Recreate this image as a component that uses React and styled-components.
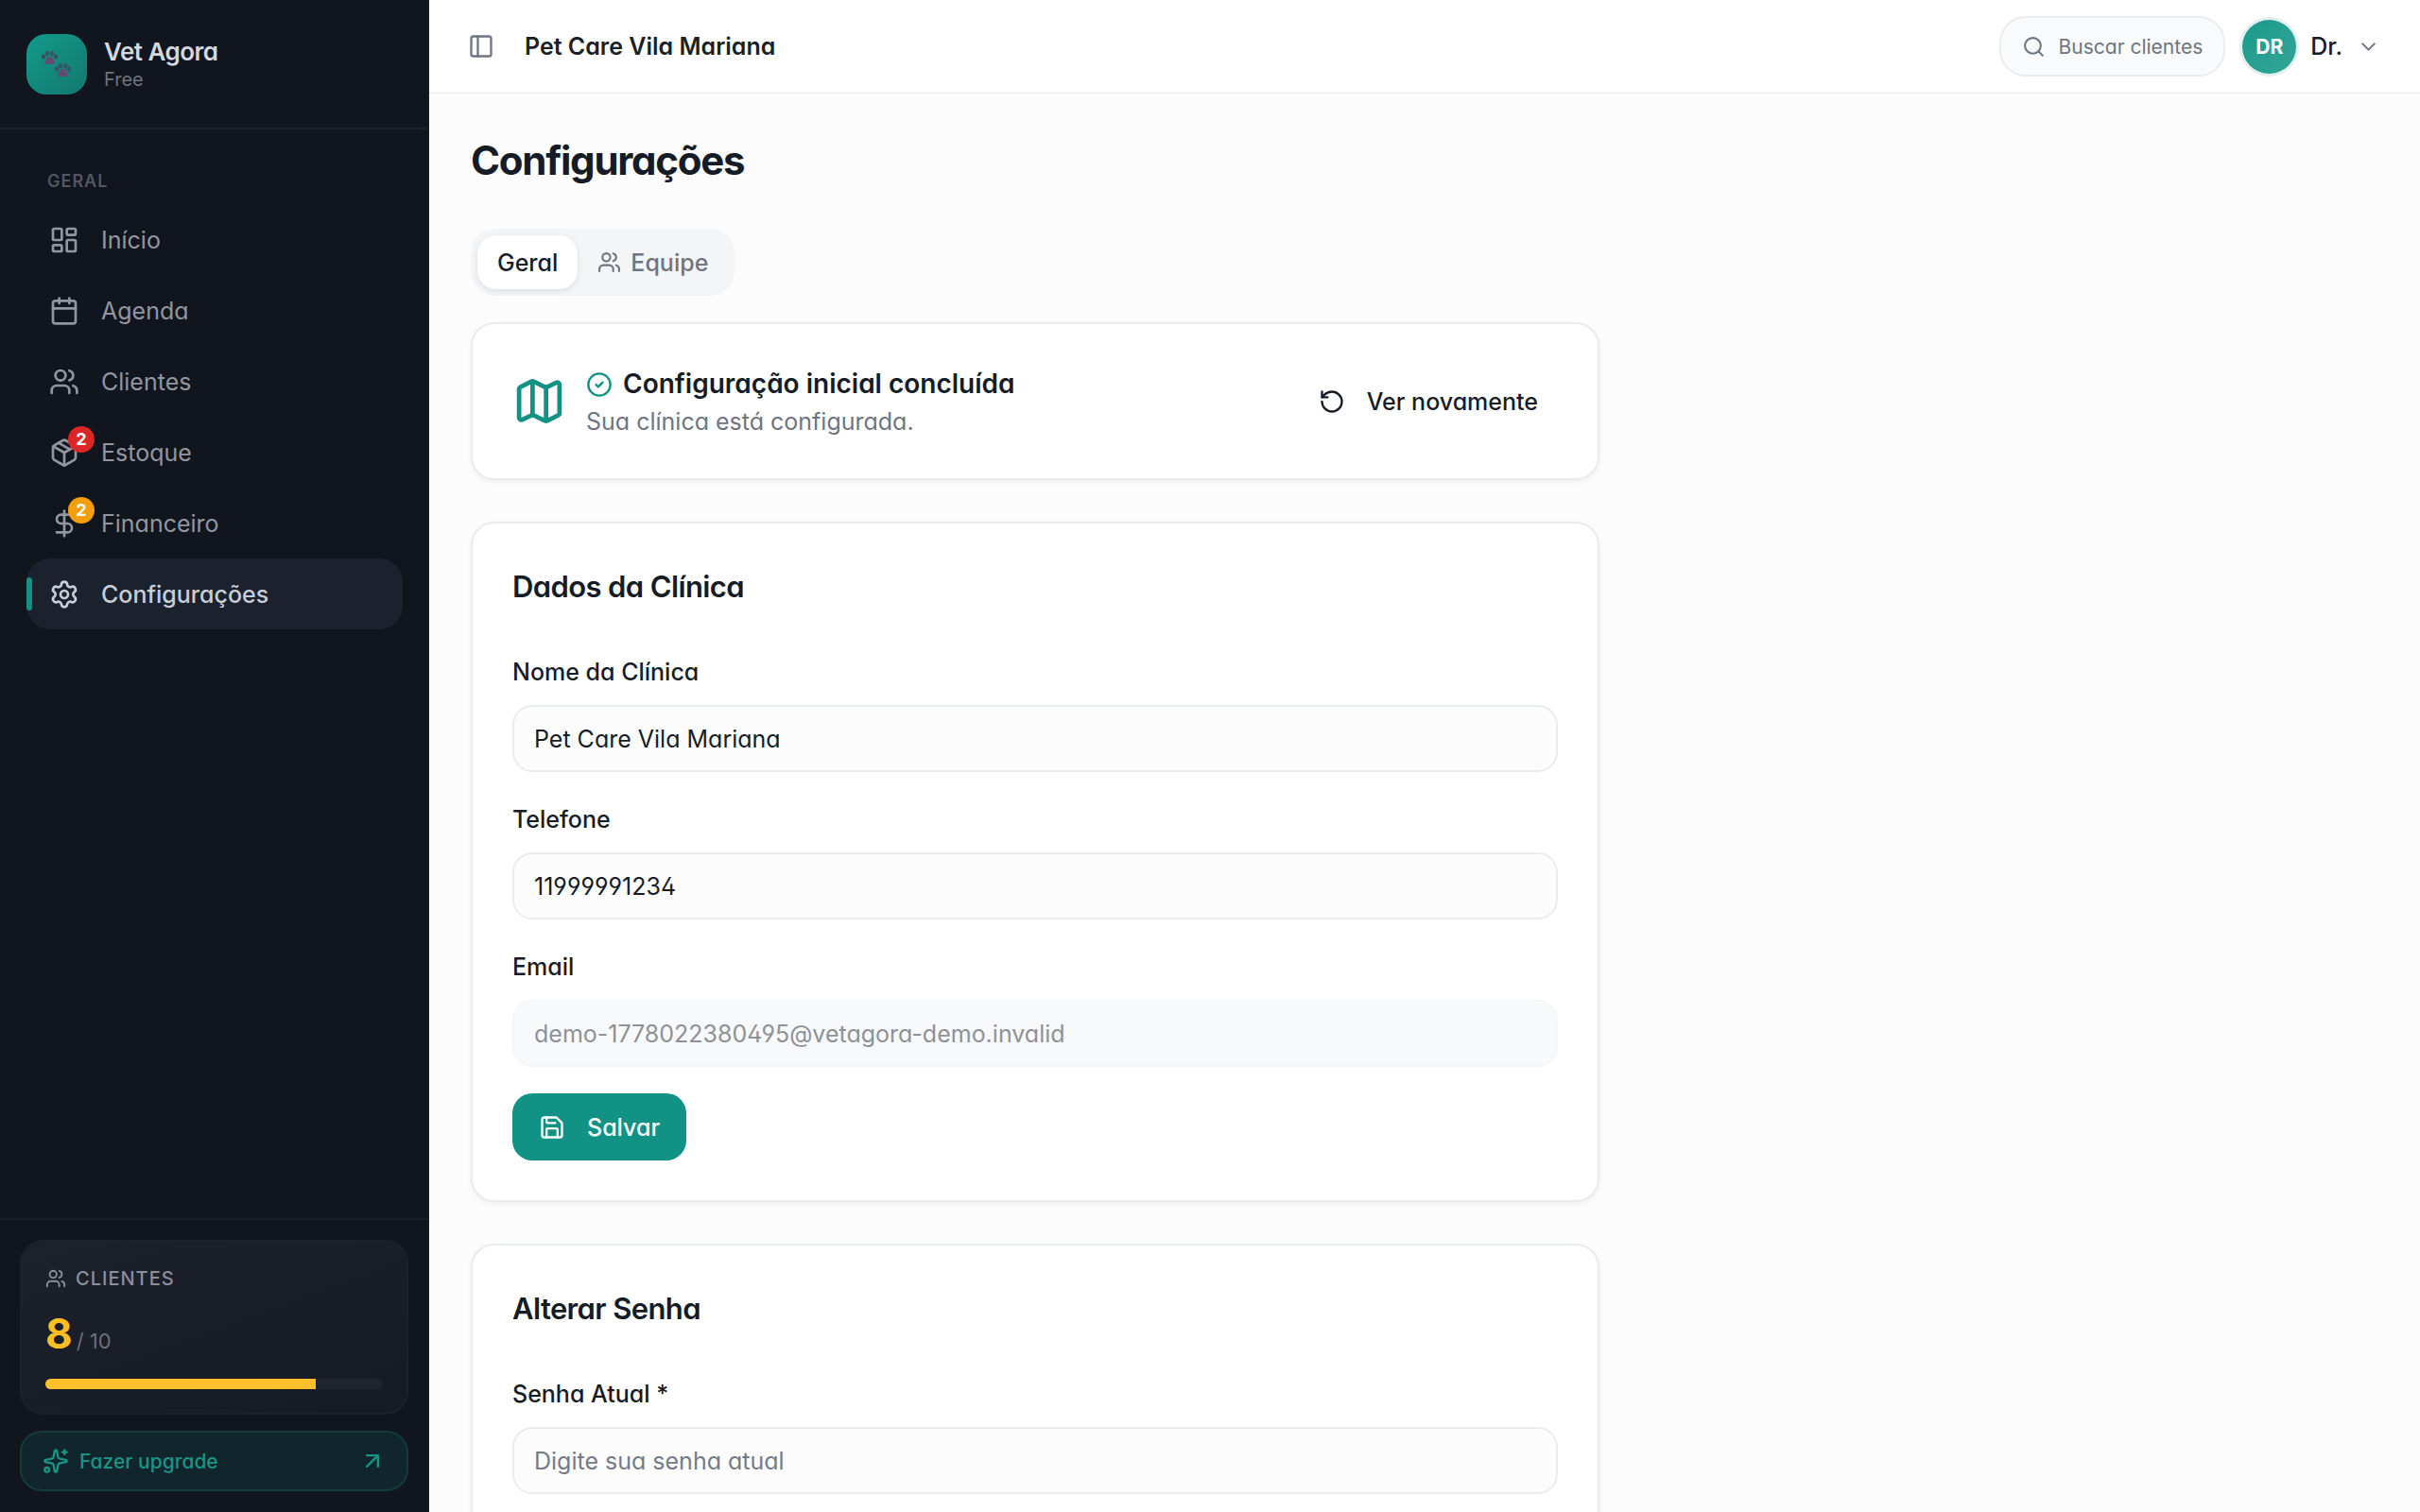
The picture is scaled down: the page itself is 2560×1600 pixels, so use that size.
import React, { useState } from 'react';
import styled, { createGlobalStyle, css } from 'styled-components';
import {
    ArrowUpRight,
    Calendar,
    ChevronDown,
    CircleCheck,
    DollarSign,
    LayoutDashboard,
    Map,
    Package,
    PanelLeft,
    RotateCcw,
    Save,
    Search,
    Settings,
    Sparkles,
    Users
} from 'lucide-react';

const GlobalStyle = createGlobalStyle`
    *, *::before, *::after {
        box-sizing: border-box;
    }

    body {
        margin: 0;
        color: #161c26;
        background: #fcfcfd;
        font-family: Inter, 'Liberation Sans', sans-serif;
        font-feature-settings: 'cv02', 'cv03', 'cv04', 'cv11';
        font-size: 25px;
    }

    button, input {
        font: inherit;
        font-feature-settings: inherit;
        color: inherit;
    }

    button {
        border: 0;
        padding: 0;
        background: none;
        cursor: pointer;
    }

    h1, h2, p, ul {
        margin: 0;
        padding: 0;
    }

    svg {
        flex: none;
        display: block;
    }
`;

const Shell = styled.div`
    display: flex;
    height: 100vh;
    overflow: hidden;
`;

const Sidebar = styled.aside`
    display: flex;
    flex: none;
    flex-direction: column;
    width: 454px;
    background: #11151e;
    border-right: 1px solid #1c212b;
`;

const Brand = styled.div`
    display: flex;
    align-items: center;
    gap: 18px;
    height: 137px;
    padding: 0 28px;
    border-bottom: 2px solid #1a1f29;
`;

const LogoBox = styled.div`
    display: grid;
    place-items: center;
    width: 64px;
    height: 64px;
    border-radius: 21px;
    background: linear-gradient(135deg, #119b8b, #14776d);
`;

const BrandName = styled.div`
    font-size: 26px;
    font-weight: 600;
    line-height: 32px;
    letter-spacing: -0.02em;
    color: #d3d7e0;
`;

const BrandPlan = styled.div`
    font-size: 20px;
    line-height: 26px;
    color: #6f747f;
`;

const Nav = styled.nav`
    flex: 1;
    padding: 43px 27px 0 28px;
`;

const NavHeading = styled.div`
    padding: 0 22px;
    margin-bottom: 12px;
    font-size: 18px;
    font-weight: 600;
    line-height: 24px;
    letter-spacing: 1px;
    text-transform: uppercase;
    color: #525761;
`;

const NavList = styled.ul`
    list-style: none;
`;

const NavLink = styled.a`
    position: relative;
    display: flex;
    align-items: center;
    gap: 23px;
    height: 75px;
    padding: 0 24px;
    border-radius: 25px;
    color: #9296a0;
    text-decoration: none;

    ${({ $active }) =>
        $active &&
        css`
            background: #1c222d;
            color: #c9cdd7;
            font-weight: 500;

            &::before {
                content: '';
                position: absolute;
                left: 0;
                top: 20px;
                width: 6px;
                height: 35px;
                border-radius: 4px;
                background: #119284;
            }
        `}
`;

const IconHolder = styled.span`
    position: relative;
`;

const Badge = styled.span`
    position: absolute;
    top: -12px;
    right: -16px;
    display: grid;
    place-items: center;
    width: 28px;
    height: 28px;
    border-radius: 50%;
    background: ${({ $color }) => $color};
    color: #fff;
    font-size: 18px;
    font-weight: 700;
    line-height: 28px;
`;

const SidebarFooter = styled.div`
    display: flex;
    flex-direction: column;
    gap: 17px;
    padding: 21px 21px 22px;
    border-top: 2px solid #1a1f29;
`;

const UsageCard = styled.section`
    padding: 25px;
    border: 2px solid #1c212c;
    border-radius: 25px;
    background: linear-gradient(160deg, #1c212c, #161a23);
`;

const UsageLabel = styled.div`
    display: flex;
    align-items: center;
    gap: 10px;
    font-size: 20px;
    font-weight: 500;
    line-height: 28px;
    letter-spacing: 1px;
    text-transform: uppercase;
    color: #8a8f9b;
`;

const UsageCount = styled.div`
    display: flex;
    align-items: baseline;
    gap: 4px;
    margin: 23px 0 18px;
    font-size: 22px;
    line-height: 43px;
    color: #6b707c;

    strong {
        font-size: 44px;
        font-weight: 700;
        color: #fbbf24;
    }
`;

const UsageTrack = styled.div`
    height: 11px;
    border-radius: 6px;
    overflow: hidden;
    background: #1f252f;
`;

const UsageFill = styled.div`
    height: 100%;
    background: #fbc02a;
`;

const UpgradeLink = styled.a`
    display: flex;
    align-items: center;
    gap: 11px;
    height: 64px;
    padding: 0 22px;
    border: 2px solid #133c3b;
    border-radius: 23px;
    background: #11262c;
    color: #1c9385;
    font-size: 21px;
    font-weight: 500;
    text-decoration: none;

    span {
        flex: 1;
    }
`;

const Content = styled.div`
    display: flex;
    flex: 1;
    flex-direction: column;
    min-width: 0;
`;

const Header = styled.header`
    display: flex;
    flex: none;
    align-items: center;
    height: 99px;
    padding: 0 42px 0 41px;
    border-bottom: 1px solid #e6e9ec;
    background: #fff;
`;

const ToggleButton = styled.button`
    color: #6f7580;
`;

const ClinicName = styled.div`
    flex: 1;
    margin-left: 32px;
    font-weight: 600;
    color: #1b1f26;
`;

const SearchButton = styled.button`
    display: flex;
    align-items: center;
    gap: 14px;
    height: 64px;
    margin-right: 18px;
    padding: 0 22px;
    border: 2px solid #e9edef;
    border-radius: 28px;
    background: #f9fafb;
    color: #6f7580;
    font-size: 21px;
`;

const UserButton = styled.button`
    display: flex;
    align-items: center;
    gap: 15px;
    font-weight: 500;

    svg {
        color: #6f7580;
    }
`;

const Avatar = styled.span`
    display: grid;
    place-items: center;
    width: 57px;
    height: 57px;
    border-radius: 50%;
    box-shadow: 0 0 0 3px #e3efef;
    background: linear-gradient(135deg, #1b9a8b, #33a697);
    color: #fff;
    font-size: 21px;
    font-weight: 700;
`;

const Main = styled.main`
    flex: 1;
    padding: 43px 44px;
    overflow-y: auto;
    scrollbar-width: none;
`;

const PageTitle = styled.h1`
    margin-bottom: 44px;
    font-size: 42px;
    font-weight: 700;
    line-height: 56px;
    letter-spacing: -0.03em;
`;

const TabList = styled.div`
    display: flex;
    width: fit-content;
    padding: 7px;
    margin-bottom: 28px;
    border-radius: 25px;
    background: #f3f5f7;
`;

const Tab = styled.button`
    display: flex;
    align-items: center;
    gap: 10px;
    height: 57px;
    padding: 0 21px;
    border-radius: 20px;
    font-weight: 500;
    color: #6f7580;

    ${({ $active }) =>
        $active &&
        css`
            background: #fff;
            color: #161c26;
            box-shadow: 0 2px 6px rgba(16, 24, 40, 0.1);
        `}
`;

const Cards = styled.div`
    display: flex;
    flex-direction: column;
    gap: 44px;
    max-width: 1194px;
`;

const Card = styled.section`
    padding: 42px;
    border: 2px solid #e9ecee;
    border-radius: 25px;
    background: #fff;
    box-shadow: 0 2px 5px rgba(16, 24, 40, 0.06);
`;

const CardTitle = styled.h2`
    margin-bottom: 43px;
    font-size: 31px;
    font-weight: 600;
    line-height: 50px;
    letter-spacing: -0.02em;
`;

const SetupRow = styled.div`
    display: flex;
    align-items: center;
    gap: 21px;

    > svg {
        color: #119284;
    }
`;

const SetupText = styled.div`
    flex: 1;
`;

const SetupTitle = styled.h2`
    display: flex;
    align-items: center;
    gap: 11px;
    font-size: 28px;
    font-weight: 600;
    line-height: 43px;

    svg {
        color: #119284;
    }
`;

const SetupSubtitle = styled.p`
    line-height: 36px;
    color: #6f7580;
`;

const GhostButton = styled.button`
    display: flex;
    align-items: center;
    gap: 23px;
    height: 64px;
    padding: 0 21px;
    font-weight: 500;
`;

const Form = styled.form`
    display: flex;
    flex-direction: column;
    align-items: flex-start;
    gap: 28px;
`;

const Field = styled.div`
    display: flex;
    flex-direction: column;
    gap: 12px;
    width: 100%;
`;

const Label = styled.label`
    font-weight: 500;
    line-height: 45px;
`;

const Input = styled.input`
    width: 100%;
    height: 71px;
    padding: 0 21px;
    border: 2px solid #e9ecee;
    border-radius: 21px;
    outline: none;
    background: #fcfcfd;

    &::placeholder {
        color: #757b86;
        opacity: 1;
    }

    &:disabled {
        border-color: #f5f6f7;
        background: #f8f9fb;
        color: #8e9196;
    }
`;

const PrimaryButton = styled.button`
    display: flex;
    align-items: center;
    gap: 23px;
    height: 71px;
    padding: 0 28px;
    border-radius: 21px;
    background: #119284;
    color: #fff;
    font-weight: 500;
`;

const Paw = ({ x, y }) => (
    <g transform={`translate(${x} ${y})`}>
        <g fill="#2f5a6b" stroke="#4b4560" strokeWidth="1">
            <ellipse cx="2" cy="6" rx="1.6" ry="2.2" />
            <ellipse cx="6" cy="2.8" rx="1.7" ry="2.3" />
            <ellipse cx="11" cy="2.8" rx="1.7" ry="2.3" />
            <ellipse cx="15" cy="6" rx="1.6" ry="2.2" />
        </g>
        <path
            d="M8.5 6c-2.6 0-3.6 2-4.6 3.8C3 11.4 3 14 5.5 14c1.2 0 2-.3 3-.3s1.8.3 3 .3c2.5 0 2.5-2.6 1.6-4.2C12.1 8 11.1 6 8.5 6z"
            fill="#654a72"
        />
    </g>
);

const PawLogo = () => (
    <svg width="32" height="30" viewBox="0 0 32 30" aria-hidden="true">
        <Paw x={0} y={1} />
        <Paw x={14} y={14} />
    </svg>
);

const NAV_ITEMS = [
    { label: 'Início', icon: LayoutDashboard },
    { label: 'Agenda', icon: Calendar },
    { label: 'Clientes', icon: Users },
    { label: 'Estoque', icon: Package, badge: 2, badgeColor: '#dc2626' },
    { label: 'Financeiro', icon: DollarSign, badge: 2, badgeColor: '#f59e0b' },
    { label: 'Configurações', icon: Settings, active: true }
];

const USAGE = { used: 8, limit: 10 };

const AppSidebar = () => (
    <Sidebar>
        <Brand>
            <LogoBox>
                <PawLogo />
            </LogoBox>
            <div>
                <BrandName>Vet Agora</BrandName>
                <BrandPlan>Free</BrandPlan>
            </div>
        </Brand>
        <Nav>
            <NavHeading>Geral</NavHeading>
            <NavList>
                {NAV_ITEMS.map(({ label, icon: Icon, badge, badgeColor, active }) => (
                    <li key={label}>
                        <NavLink href="#" $active={active} aria-current={active ? 'page' : undefined}>
                            <IconHolder>
                                <Icon size={32} />
                                {badge && <Badge $color={badgeColor}>{badge}</Badge>}
                            </IconHolder>
                            {label}
                        </NavLink>
                    </li>
                ))}
            </NavList>
        </Nav>
        <SidebarFooter>
            <UsageCard>
                <UsageLabel>
                    <Users size={22} />
                    Clientes
                </UsageLabel>
                <UsageCount>
                    <strong>{USAGE.used}</strong>
                    <span>/ {USAGE.limit}</span>
                </UsageCount>
                <UsageTrack>
                    <UsageFill style={{ width: `${(USAGE.used / USAGE.limit) * 100}%` }} />
                </UsageTrack>
            </UsageCard>
            <UpgradeLink href="#">
                <Sparkles size={28} />
                <span>Fazer upgrade</span>
                <ArrowUpRight size={28} />
            </UpgradeLink>
        </SidebarFooter>
    </Sidebar>
);

const AppHeader = () => (
    <Header>
        <ToggleButton type="button" aria-label="Menu">
            <PanelLeft size={28} />
        </ToggleButton>
        <ClinicName>Pet Care Vila Mariana</ClinicName>
        <SearchButton type="button">
            <Search size={25} />
            Buscar clientes
        </SearchButton>
        <UserButton type="button">
            <Avatar>DR</Avatar>
            Dr.
            <ChevronDown size={25} />
        </UserButton>
    </Header>
);

const App = () => {
    const [tab, setTab] = useState('geral');
    const [name, setName] = useState('Pet Care Vila Mariana');
    const [phone, setPhone] = useState('11999991234');

    return (
        <>
            <GlobalStyle />
            <Shell>
                <AppSidebar />
                <Content>
                    <AppHeader />
                    <Main>
                        <PageTitle>Configurações</PageTitle>
                        <TabList role="tablist">
                            <Tab
                                type="button"
                                role="tab"
                                aria-selected={tab === 'geral'}
                                $active={tab === 'geral'}
                                onClick={() => setTab('geral')}
                            >
                                Geral
                            </Tab>
                            <Tab
                                type="button"
                                role="tab"
                                aria-selected={tab === 'equipe'}
                                $active={tab === 'equipe'}
                                onClick={() => setTab('equipe')}
                            >
                                <Users size={25} />
                                Equipe
                            </Tab>
                        </TabList>
                        <Cards>
                            <Card>
                                <SetupRow>
                                    <Map size={57} />
                                    <SetupText>
                                        <SetupTitle>
                                            <CircleCheck size={28} />
                                            Configuração inicial concluída
                                        </SetupTitle>
                                        <SetupSubtitle>Sua clínica está configurada.</SetupSubtitle>
                                    </SetupText>
                                    <GhostButton type="button">
                                        <RotateCcw size={28} />
                                        Ver novamente
                                    </GhostButton>
                                </SetupRow>
                            </Card>
                            <Card>
                                <CardTitle>Dados da Clínica</CardTitle>
                                <Form onSubmit={e => e.preventDefault()}>
                                    <Field>
                                        <Label htmlFor="clinic-name">Nome da Clínica</Label>
                                        <Input
                                            id="clinic-name"
                                            value={name}
                                            onChange={e => setName(e.target.value)}
                                        />
                                    </Field>
                                    <Field>
                                        <Label htmlFor="clinic-phone">Telefone</Label>
                                        <Input
                                            id="clinic-phone"
                                            type="tel"
                                            value={phone}
                                            onChange={e => setPhone(e.target.value)}
                                        />
                                    </Field>
                                    <Field>
                                        <Label htmlFor="clinic-email">Email</Label>
                                        <Input
                                            id="clinic-email"
                                            type="email"
                                            value="demo-1778022380495@vetagora-demo.invalid"
                                            disabled
                                            readOnly
                                        />
                                    </Field>
                                    <PrimaryButton type="submit">
                                        <Save size={28} />
                                        Salvar
                                    </PrimaryButton>
                                </Form>
                            </Card>
                            <Card>
                                <CardTitle>Alterar Senha</CardTitle>
                                <Form onSubmit={e => e.preventDefault()}>
                                    <Field>
                                        <Label htmlFor="current-password">Senha Atual *</Label>
                                        <Input
                                            id="current-password"
                                            type="password"
                                            placeholder="Digite sua senha atual"
                                        />
                                    </Field>
                                </Form>
                            </Card>
                        </Cards>
                    </Main>
                </Content>
            </Shell>
        </>
    );
};

export default App;
